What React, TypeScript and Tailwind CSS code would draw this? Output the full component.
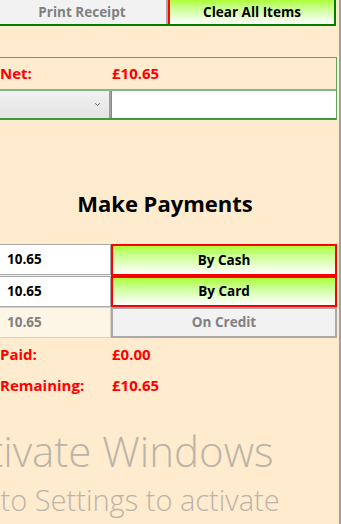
import { ChevronDown } from 'lucide-react'

const font = { fontFamily: '"Open Sans", "Noto Sans", sans-serif' }

const PayRow = ({
  amount,
  label,
  active,
  tall,
}: {
  amount: string
  label: string
  active: boolean
  tall?: boolean
}) => (
  <div className={tall ? 'flex h-[32px] items-stretch' : 'flex h-[31px] items-stretch'}>
    <div
      className={
        active
          ? 'flex h-[31px] w-[111px] items-center border border-l-0 border-[#a9a9a9] bg-white pl-[7px] text-[13.5px] font-bold text-black'
          : 'flex h-[31px] w-[111px] items-center border border-l-0 border-[#d9cfc2] bg-[#fdf5e6] pl-[7px] text-[13.5px] font-bold text-[#808080]'
      }
    >
      {amount}
    </div>
    <div
      className={
        active
          ? 'flex w-[226px] items-center justify-center border-2 border-[#ff0000] bg-gradient-to-b from-[#adff2f] to-white text-[13.5px] font-bold text-black'
          : 'flex w-[226px] items-center justify-center border-2 border-[#a9a9a9] bg-[#f2f2f2] text-[13.5px] font-bold text-[#808080]'
      }
    >
      {label}
    </div>
  </div>
)

export default function App() {
  return (
    <div
      className="flex h-[524px] w-[341px] overflow-hidden bg-[#ffebcd]"
      style={font}
    >
      <div className="flex w-[337px] flex-col">
        <div className="flex h-[26px] w-[336px] border-b-2 border-[#008000]">
          <div className="flex w-[168px] items-center justify-center border-r-2 border-[#a9a9a9] bg-[#f2f2f2] pr-[2px] text-[13.5px] font-bold text-[#808080]">
            Print Receipt
          </div>
          <div className="flex flex-1 items-center justify-center border-x-2 border-l-[#ff0000] border-r-[#008000] bg-gradient-to-b from-[#adff2f] to-white text-[13.5px] font-bold text-black">
            Clear All Items
          </div>
        </div>

        <div className="mt-[31px] w-[337px] border-t border-r border-[#5ea85e]">
          <div className="flex h-[31px] items-center text-[15px] font-bold text-[#ff0000]">
            <span className="w-[112px]">Net:</span>
            <span>£10.65</span>
          </div>
          <div className="flex h-[31px] border-y-2 border-t-[#84b884] border-b-[#3f9a3f]">
            <div className="flex w-[111px] items-center justify-end border-r-2 border-[#a0a0a0] bg-gradient-to-b from-[#f2f2f2] to-[#e3e3e3] pr-[7px]">
              <ChevronDown size={9} strokeWidth={2.2} className="text-[#555]" />
            </div>
            <div className="flex-1 border-l border-[#5ea85e] bg-white" />
          </div>
        </div>

        <h1 className="mt-[68px] h-[30px] pr-[7px] text-center text-[22px] leading-[30px] font-bold text-black">
          Make Payments
        </h1>

        <div className="mt-[26px] flex flex-col">
          <PayRow amount="10.65" label="By Cash" active tall />
          <PayRow amount="10.65" label="By Card" active />
          <PayRow amount="10.65" label="On Credit" active={false} />
        </div>

        <div className="mt-[6px] flex h-[20px] items-center text-[15px] font-bold text-[#ff0000]">
          <span className="w-[112px]">Paid:</span>
          <span>£0.00</span>
        </div>
        <div className="mt-[11px] flex h-[20px] items-center text-[15px] font-bold text-[#ff0000]">
          <span className="w-[112px]">Remaining:</span>
          <span>£10.65</span>
        </div>

        <div className="mt-[34px] ml-[-56px] whitespace-nowrap text-[42px] leading-[44px] font-light text-[#bbb4aa]">
          Activate Windows
        </div>
        <div className="mt-[9px] ml-[-45px] whitespace-nowrap text-[29px] leading-[36px] font-light text-[#bbb4aa]">
          Go to Settings to activate
        </div>
      </div>
      <div className="w-[2px]" />
      <div className="w-[2px] bg-[#a0a0a0]" />
    </div>
  )
}
